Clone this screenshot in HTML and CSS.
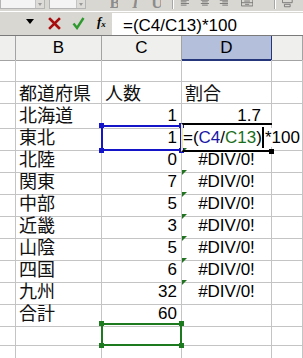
FILE: index.html
```html
<!DOCTYPE html>
<html lang="ja">
<head>
    <meta charset="UTF-8">
    <meta name="viewport" content="width=device-width, initial-scale=1.0">
    <title>割合の計算</title>
    <link rel="stylesheet" href="styles.css">
</head>
<body>
    <div class="toolbar">
        <div class="combo combo-name"><span class="drop"></span></div>
        <div class="combo combo-size"><span class="drop"></span></div>
        <span class="tb-letter tb-bold">B</span>
        <span class="tb-letter tb-italic">I</span>
        <span class="tb-letter tb-under">U</span>
        <span class="tb-sep"></span>
        <svg class="tb-icon" width="12" height="11" viewBox="0 0 12 11"><path d="M1 1.5h10M1 3.5h7M1 5.5h10M1 7.5h7" stroke="#6a6a6a" stroke-width="1"/></svg>
        <svg class="tb-icon" width="12" height="11" viewBox="0 0 12 11"><path d="M1 1.5h10M2.5 3.5h7M1 5.5h10M2.5 7.5h7" stroke="#6a6a6a" stroke-width="1"/></svg>
        <svg class="tb-icon" width="12" height="11" viewBox="0 0 12 11"><path d="M1 1.5h10M4 3.5h7M1 5.5h10M4 7.5h7" stroke="#6a6a6a" stroke-width="1"/></svg>
        <svg class="tb-icon tb-merge" width="15" height="11" viewBox="0 0 15 11"><path d="M0.5 0.5v8h14v-8M0.5 4.5h14M4 2.5h7M5 6.5h5" stroke="#6a6a6a" fill="none" stroke-width="1"/></svg>
        <span class="tb-sep"></span>
        <svg class="tb-icon" width="13" height="11" viewBox="0 0 13 11"><path d="M0.5 0.5h12v4h-12zM3 6.5h7v3h-7z" stroke="#6a6a6a" fill="none" stroke-width="1"/></svg>
    </div>

    <div class="formula-bar">
        <div class="fb-tools">
            <svg class="fb-drop" width="8" height="5" viewBox="0 0 8 5"><path d="M0 0h8L4 5z" fill="#000"/></svg>
            <svg class="fb-cancel" width="13" height="13" viewBox="0 0 13 13"><path d="M2 2l9 9M11 2l-9 9" stroke="#a80c0c" stroke-width="2.6" stroke-linecap="square"/></svg>
            <svg class="fb-enter" width="13" height="13" viewBox="0 0 13 13"><path d="M1.5 6.5l3.5 4.5 6.5-10" stroke="#2e9a2e" stroke-width="2.4" fill="none"/></svg>
            <span class="fx">f<sub>x</sub></span>
        </div>
        <div class="fb-input">=(C4/C13)*100</div>
    </div>

    <div class="sheet">
        <div class="row head">
            <div class="cell"></div>
            <div class="cell">B</div>
            <div class="cell">C</div>
            <div class="cell selected-col">D</div>
            <div class="cell"></div>
        </div>
        <div class="row">
            <div class="cell"></div><div class="cell"></div><div class="cell"></div><div class="cell"></div><div class="cell"></div>
        </div>
        <div class="row">
            <div class="cell"></div>
            <div class="cell jp">都道府県</div>
            <div class="cell jp">人数</div>
            <div class="cell jp">割合</div>
            <div class="cell"></div>
        </div>
        <div class="row">
            <div class="cell"></div>
            <div class="cell jp">北海道</div>
            <div class="cell num">1</div>
            <div class="cell num ratio">1.7</div>
            <div class="cell"></div>
        </div>
        <div class="row">
            <div class="cell"></div>
            <div class="cell jp">東北</div>
            <div class="cell num ref-blue"><span class="handle tl"></span><span class="handle tr"></span><span class="handle bl"></span><span class="handle br"></span>1</div>
            <div class="cell editing">
                <span class="edit-frame"></span>
                <span class="edit-text">=(<span class="c-blue">C4</span>/<span class="c-green">C13</span>)<span class="caret"></span>*100</span>
            </div>
            <div class="cell"></div>
        </div>
        <div class="row">
            <div class="cell"></div>
            <div class="cell jp">北陸</div>
            <div class="cell num">0</div>
            <div class="cell err">#DIV/0!</div>
            <div class="cell"></div>
        </div>
        <div class="row">
            <div class="cell"></div>
            <div class="cell jp">関東</div>
            <div class="cell num">7</div>
            <div class="cell err">#DIV/0!</div>
            <div class="cell"></div>
        </div>
        <div class="row">
            <div class="cell"></div>
            <div class="cell jp">中部</div>
            <div class="cell num">5</div>
            <div class="cell err">#DIV/0!</div>
            <div class="cell"></div>
        </div>
        <div class="row">
            <div class="cell"></div>
            <div class="cell jp">近畿</div>
            <div class="cell num">3</div>
            <div class="cell err">#DIV/0!</div>
            <div class="cell"></div>
        </div>
        <div class="row">
            <div class="cell"></div>
            <div class="cell jp">山陰</div>
            <div class="cell num">5</div>
            <div class="cell err">#DIV/0!</div>
            <div class="cell"></div>
        </div>
        <div class="row">
            <div class="cell"></div>
            <div class="cell jp">四国</div>
            <div class="cell num">6</div>
            <div class="cell err">#DIV/0!</div>
            <div class="cell"></div>
        </div>
        <div class="row">
            <div class="cell"></div>
            <div class="cell jp">九州</div>
            <div class="cell num">32</div>
            <div class="cell err">#DIV/0!</div>
            <div class="cell"></div>
        </div>
        <div class="row">
            <div class="cell"></div>
            <div class="cell jp">合計</div>
            <div class="cell num">60</div>
            <div class="cell"></div>
            <div class="cell"></div>
        </div>
        <div class="row">
            <div class="cell"></div>
            <div class="cell"></div>
            <div class="cell ref-green"><span class="handle tl"></span><span class="handle tr"></span><span class="handle bl"></span><span class="handle br"></span></div>
            <div class="cell"></div>
            <div class="cell"></div>
        </div>
        <div class="row">
            <div class="cell"></div><div class="cell"></div><div class="cell"></div><div class="cell"></div><div class="cell"></div>
        </div>
    </div>
</body>
</html>
```

FILE: styles.css
```css
* { box-sizing: border-box; }
body { margin: 0; width: 303px; height: 358px; overflow: hidden; background: #fff; font-family: "Liberation Sans", Arial, sans-serif; color: #000; }

/* toolbar (only the lower edge is visible) */
.toolbar { height: 11px; background: #d9d7d2; display: flex; align-items: flex-end; overflow: hidden; padding-bottom: 2px; }
.combo { height: 12px; background: #f4f4f4; border: 1px solid #b4b4b4; border-top: none; position: relative; }
.combo-name { width: 55px; }
.combo-size { width: 44px; margin-left: 4px; }
.drop { position: absolute; right: 0; top: 0; bottom: 0; width: 9px; background: #dedcd8; border-left: 1px solid #c4c4c4; }
.drop::after { content: ""; position: absolute; left: 2px; bottom: 2px; border: 2px solid transparent; border-top: 3px solid #9a9a9a; border-bottom: none; }
.tb-letter { font-family: "Liberation Serif", serif; font-size: 16px; line-height: 12px; height: 9px; overflow: hidden; color: #8c8c8c; display: flex; align-items: flex-end; }
.tb-bold { font-weight: bold; margin-left: 24px; }
.tb-italic { font-style: italic; margin-left: 14px; font-weight: bold; }
.tb-under { text-decoration: underline; margin-left: 14px; font-weight: bold; }
.tb-sep { width: 2px; height: 9px; border-left: 1px solid #a6a6a6; border-right: 1px solid #fff; margin: 0 6px 0 11px; }
.tb-icon { display: block; margin-right: 10px; }
.tb-merge { margin-left: 2px; }

/* formula bar */
.formula-bar { height: 25px; background: #d9d7d2; border-top: 1px solid #fff; border-bottom: 1px solid #7a7a7a; display: flex; padding-top: 1px; }
.fb-tools { width: 112px; display: flex; align-items: center; padding-left: 26px; padding-bottom: 2px; }
.fb-drop { margin-top: -3px; }
.fb-cancel { margin-left: 14px; }
.fb-enter { margin-left: 11px; }
.fx { font-family: "Liberation Serif", serif; font-style: italic; font-weight: bold; font-size: 13px; margin-left: 12px; line-height: 13px; }
.fx sub { font-size: 9px; vertical-align: -1px; }
.fb-input { flex: 1; background: #fff; font-size: 17px; line-height: 19px; padding: 3px 0 0 11px; white-space: nowrap; }

/* sheet */
.row { display: grid; grid-template-columns: 16px 86px 80px 90px 1fr; height: 22px; }
.cell { border-right: 1px solid #c4c4c4; border-bottom: 1px solid #c4c4c4; font-size: 17px; line-height: 24px; padding: 0 3px; white-space: nowrap; position: relative; }
.jp { font-family: "Noto Sans CJK JP", sans-serif; font-size: 18px; line-height: 21px; color: #111; }
.num { text-align: right; padding-right: 4px; }
.ratio { padding-right: 10px; }
.err { text-align: center; padding: 0; }
.err::before { content: ""; position: absolute; left: 0; top: 0; border-top: 5px solid #217321; border-right: 5px solid transparent; }

.head { height: 24px; }
.head .cell { background: #efefee; border-right-color: #a3a3a3; border-bottom-color: #a3a3a3; text-align: center; line-height: 23px; padding: 0; }
.head .selected-col { background: #b4bfdc; border-right-color: #25367a; border-bottom: 2px solid #25367a; }

/* formula reference boxes */
.ref-blue::after, .ref-green::after { content: ""; position: absolute; left: -1px; top: -1px; right: -1px; bottom: -1px; border: 2px solid #1414c8; }
.ref-green::after { border-color: #1e7a1e; }
.handle { position: absolute; width: 5px; height: 5px; background: #1414c8; z-index: 2; }
.ref-green .handle { background: #1e7a1e; }
.tl { left: -3px; top: -3px; }
.tr { right: -3px; top: -3px; }
.bl { left: -3px; bottom: -3px; }
.br { right: -3px; bottom: -3px; }

/* cell in edit mode */
.editing { padding-left: 1px; z-index: 3; overflow: visible; }
.edit-frame { position: absolute; left: -1px; top: -3px; right: -1px; bottom: -2px; border-top: 2px solid #000; border-bottom: 2px solid #000; border-left: 2px solid #ecec96; }
.edit-frame::after { content: ""; position: absolute; right: -2px; bottom: -4px; width: 5px; height: 5px; background: #000; }
.edit-text { position: relative; background: #fff; padding-right: 2px; }
.c-blue { color: #1818a8; }
.c-green { color: #1c6e1c; }
.caret { display: inline-block; width: 2px; height: 21px; background: #000; vertical-align: -5px; margin: 0 1px 0 0; }
```
